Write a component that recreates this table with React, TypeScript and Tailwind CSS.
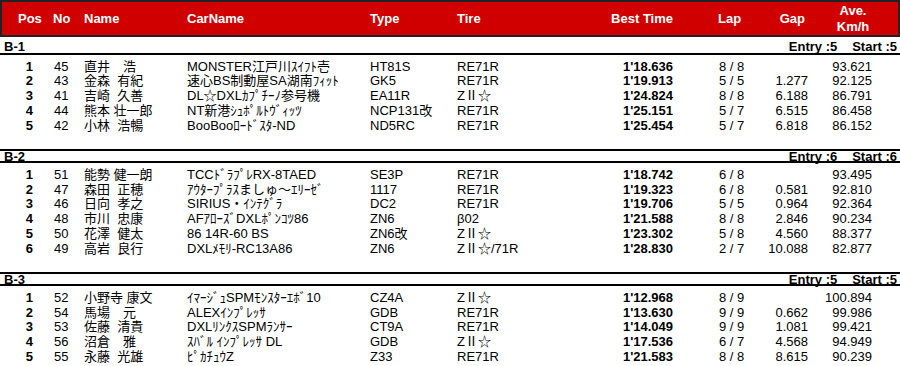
import React from "react";

type Row = {
  pos: string;
  no: string;
  name: string;
  car: string;
  type: string;
  tire: string;
  best: string;
  lap: string;
  gap: string;
  ave: string;
};

type Section = { title: string; entry: string; start: string; rows: Row[] };

const sections: Section[] = [
  {
    title: "B-1",
    entry: "5",
    start: "5",
    rows: [
      { pos: "1", no: "45", name: "直井　浩", car: "MONSTER江戸川ｽｲﾌﾄ壱", type: "HT81S", tire: "RE71R", best: "1'18.636", lap: "8 / 8", gap: "", ave: "93.621" },
      { pos: "2", no: "43", name: "金森  有紀", car: "速心BS制動屋SA湖南ﾌｨｯﾄ", type: "GK5", tire: "RE71R", best: "1'19.913", lap: "5 / 5", gap: "1.277", ave: "92.125" },
      { pos: "3", no: "41", name: "吉崎  久善", car: "DL☆DXLｶﾌﾟﾁｰﾉ参号機", type: "EA11R", tire: "ZⅡ☆", best: "1'24.824", lap: "8 / 8", gap: "6.188", ave: "86.791" },
      { pos: "4", no: "44", name: "熊本 壮一郎", car: "NT新港ｼｭﾎﾟﾙﾄｳﾞｨｯﾂ", type: "NCP131改", tire: "RE71R", best: "1'25.151", lap: "5 / 7", gap: "6.515", ave: "86.458" },
      { pos: "5", no: "42", name: "小林  浩暢", car: "BooBooﾛｰﾄﾞｽﾀ-ND", type: "ND5RC", tire: "RE71R", best: "1'25.454", lap: "5 / 7", gap: "6.818", ave: "86.152" },
    ],
  },
  {
    title: "B-2",
    entry: "6",
    start: "6",
    rows: [
      { pos: "1", no: "51", name: "能勢 健一朗", car: "TCCﾄﾞﾗﾌﾟﾚRX-8TAED", type: "SE3P", tire: "RE71R", best: "1'18.742", lap: "6 / 8", gap: "", ave: "93.495" },
      { pos: "2", no: "47", name: "森田  正穂", car: "ｱｳﾀｰﾌﾟﾗｽましゅ～ｴﾘｰｾﾞ", type: "1117", tire: "RE71R", best: "1'19.323", lap: "6 / 8", gap: "0.581", ave: "92.810" },
      { pos: "3", no: "46", name: "日向  孝之", car: "SIRIUS・ｲﾝﾃｸﾞﾗ", type: "DC2", tire: "RE71R", best: "1'19.706", lap: "5 / 5", gap: "0.964", ave: "92.364" },
      { pos: "4", no: "48", name: "市川  忠康", car: "AFｱﾛｰｽﾞDXLﾎﾟﾝｺﾂ86", type: "ZN6", tire: "β02", best: "1'21.588", lap: "8 / 8", gap: "2.846", ave: "90.234" },
      { pos: "5", no: "50", name: "花澤  健太", car: "86 14R-60 BS", type: "ZN6改", tire: "ZⅡ☆", best: "1'23.302", lap: "5 / 8", gap: "4.560", ave: "88.377" },
      { pos: "6", no: "49", name: "高岩  良行", car: "DXLﾒﾓﾘ-RC13A86", type: "ZN6", tire: "ZⅡ☆/71R", best: "1'28.830", lap: "2 / 7", gap: "10.088", ave: "82.877" },
    ],
  },
  {
    title: "B-3",
    entry: "5",
    start: "5",
    rows: [
      { pos: "1", no: "52", name: "小野寺 康文", car: "ｲﾏｰｼﾞｭSPMﾓﾝｽﾀｰｴﾎﾞ10", type: "CZ4A", tire: "ZⅡ☆", best: "1'12.968", lap: "8 / 9", gap: "", ave: "100.894" },
      { pos: "2", no: "54", name: "馬場　元", car: "ALEXｲﾝﾌﾟﾚｯｻ", type: "GDB", tire: "RE71R", best: "1'13.630", lap: "9 / 9", gap: "0.662", ave: "99.986" },
      { pos: "3", no: "53", name: "佐藤  清貴", car: "DXLﾘﾝｸｽSPMﾗﾝｻｰ", type: "CT9A", tire: "RE71R", best: "1'14.049", lap: "9 / 9", gap: "1.081", ave: "99.421" },
      { pos: "4", no: "56", name: "沼倉　雅", car: "ｽﾊﾞﾙ ｲﾝﾌﾟﾚｯｻ DL", type: "GDB", tire: "ZⅡ☆", best: "1'17.536", lap: "6 / 7", gap: "4.568", ave: "94.949" },
      { pos: "5", no: "55", name: "永藤  光雄", car: "ﾋﾟｶﾁｭｳZ", type: "Z33", tire: "RE71R", best: "1'21.583", lap: "8 / 8", gap: "8.615", ave: "90.239" },
    ],
  },
];

function DataRow({ r }: { r: Row }) {
  return (
    <div className="flex h-[14.75px] items-center leading-[14.75px] whitespace-pre">
      <div className="w-[34px] shrink-0 pr-[1px] text-right font-bold">{r.pos}</div>
      <div className="w-[50px] shrink-0 pl-[20px]">{r.no}</div>
      <div className="w-[103px] shrink-0">{r.name}</div>
      <div className="w-[183px] shrink-0">{r.car}</div>
      <div className="w-[87px] shrink-0">{r.type}</div>
      <div className="w-[123px] shrink-0">{r.tire}</div>
      <div className="w-[94px] shrink-0 pr-[1px] text-right font-bold">{r.best}</div>
      <div className="w-[86px] shrink-0 pl-[45px]">{r.lap}</div>
      <div className="w-[48px] shrink-0 text-right">{r.gap}</div>
      <div className="w-[64px] shrink-0 text-right">{r.ave}</div>
    </div>
  );
}

function SectionBlock({ s, first }: { s: Section; first: boolean }) {
  return (
    <div className={first ? "" : "border-t-2 border-black"}>
      <div
        className={
          "flex items-center justify-between border-b-2 border-black pl-[4px] pr-[3px] font-bold " +
          (first ? "h-[18px] pt-[3px]" : "h-[12px]")
        }
      >
        <span>{s.title}</span>
        <div className="flex gap-[15px]">
          <span>Entry :{s.entry}</span>
          <span>Start :{s.start}</span>
        </div>
      </div>
      <div className="pt-[4.5px] pb-[16px]">
        {s.rows.map((r, i) => (
          <DataRow key={i} r={r} />
        ))}
      </div>
    </div>
  );
}

export default function App() {
  return (
    <div className="h-[366px] w-[900px] overflow-hidden bg-white text-[13px] text-black font-['Liberation_Sans','Noto_Sans_CJK_JP',sans-serif]">
      <div className="flex h-[37px] items-center border-2 border-[#222] bg-[#d00000] font-bold text-white leading-[16px] whitespace-nowrap">
        <div className="w-[51px] shrink-0 pl-[16px]">Pos</div>
        <div className="w-[31px] shrink-0">No</div>
        <div className="w-[103px] shrink-0">Name</div>
        <div className="w-[183px] shrink-0">CarName</div>
        <div className="w-[87px] shrink-0">Type</div>
        <div className="w-[123px] shrink-0">Tire</div>
        <div className="w-[94px] shrink-0 pr-[1px] text-right">Best Time</div>
        <div className="w-[86px] shrink-0 pl-[44px]">Lap</div>
        <div className="w-[48px] shrink-0 pr-[3px] text-right">Gap</div>
        <div className="w-[90px] shrink-0 text-center">
          Ave.
          <br />
          Km/h
        </div>
      </div>
      {sections.map((s, i) => (
        <SectionBlock key={s.title} s={s} first={i === 0} />
      ))}
    </div>
  );
}
